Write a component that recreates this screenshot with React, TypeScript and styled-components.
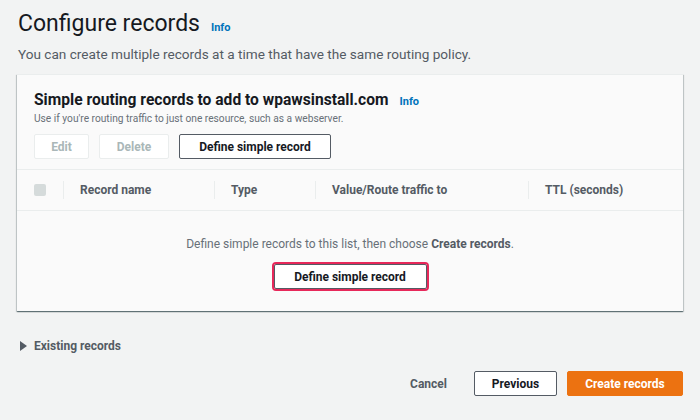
import React from "react";
import styled, { createGlobalStyle } from "styled-components";

const GlobalStyle = createGlobalStyle`
  html, body {
    margin: 0;
    padding: 0;
    background: #f2f3f3;
    font-family: Roboto, "Noto Sans", Arial, sans-serif;
    color: #16191f;
  }
  * { box-sizing: border-box; }
`;

const Page = styled.div`
  width: 700px;
  height: 420px;
  padding: 7px 17px 0 17px;
  overflow: hidden;
`;

const TitleRow = styled.div`
  display: flex;
  align-items: baseline;
  gap: 11px;
  padding-left: 1px;
`;

const Title = styled.h1`
  margin: 0;
  font-size: 23px;
  font-weight: 400;
  line-height: 34px;
  color: #16191f;
`;

const InfoLink = styled.a`
  font-size: 11px;
  font-weight: 700;
  color: #0073bb;
  text-decoration: none;
`;

const Description = styled.p`
  margin: 4px 0 11px 1px;
  font-size: 13.6px;
  line-height: 18px;
  color: #545b64;
`;

const Panel = styled.section`
  background: #fafafa;
  box-shadow: 0 1px 1px 0 rgba(0, 28, 36, 0.45), 1px 1px 1px 0 rgba(0, 28, 36, 0.15),
    -1px 1px 1px 0 rgba(0, 28, 36, 0.15);
  border-top: 1px solid #eaeded;
  width: 666px;
`;

const PanelHeader = styled.div`
  padding: 14px 17px 10px 17px;
`;

const PanelTitleRow = styled.div`
  display: flex;
  align-items: baseline;
  gap: 11px;
`;

const PanelTitle = styled.h2`
  margin: 0;
  font-size: 15.6px;
  font-weight: 700;
  line-height: 22px;
`;

const PanelSub = styled.div`
  font-size: 10.2px;
  line-height: 15px;
  color: #687078;
`;

const ButtonRow = styled.div`
  display: flex;
  gap: 10px;
  margin-top: 8px;
`;

const Button = styled.button<{ $disabled?: boolean; $focus?: boolean; $width?: number }>`
  height: 25px;
  width: ${(p) => (p.$width ? `${p.$width}px` : "auto")};
  padding: 0;
  white-space: nowrap;
  font-family: inherit;
  font-size: 12px;
  font-weight: 700;
  background: #fff;
  border-radius: 2px;
  border: 1px solid ${(p) => (p.$disabled ? "#eaeded" : "#545b64")};
  color: ${(p) => (p.$disabled ? "#aab7b8" : "#16191f")};
  outline: ${(p) => (p.$focus ? "2px solid #e7285a" : "none")};
  outline-offset: 0;
  cursor: pointer;
`;

const PrimaryButton = styled(Button)`
  background: #ec7211;
  border-color: #ec7211;
  color: #fff;
`;

const HeaderRow = styled.div`
  display: grid;
  grid-template-columns: 46px 151px 101px 213px 1fr;
  height: 42px;
  align-items: center;
  border-top: 1px solid #eaeded;
  border-bottom: 1px solid #eaeded;
`;

const HeadCell = styled.div`
  display: flex;
  align-items: center;
  height: 100%;
  padding-left: 17px;
  position: relative;
  font-size: 12px;
  font-weight: 700;
  color: #545b64;
  &:not(:first-child)::before {
    content: "";
    position: absolute;
    left: 0;
    top: 11px;
    bottom: 11px;
    width: 1px;
    background: #eaeded;
  }
`;

const Checkbox = styled.span`
  width: 12px;
  height: 12px;
  background: #d5dbdb;
  border-radius: 2px;
`;

const Empty = styled.div`
  display: flex;
  flex-direction: column;
  align-items: center;
  padding: 24px 0 22px 0;
  gap: 11px;
`;

const EmptyText = styled.div`
  font-size: 12px;
  line-height: 18px;
  color: #687078;
  b {
    color: #545b64;
  }
`;

const Expander = styled.div`
  display: flex;
  align-items: center;
  gap: 7px;
  margin: 28px 0 0 3px;
  font-size: 12px;
  font-weight: 700;
  color: #545b64;
`;

const Caret = styled.span`
  width: 0;
  height: 0;
  border-top: 5px solid transparent;
  border-bottom: 5px solid transparent;
  border-left: 7px solid #545b64;
`;

const Footer = styled.div`
  display: flex;
  justify-content: flex-end;
  align-items: center;
  gap: 10px;
  margin-top: 18px;
  width: 666px;
`;

const TextButton = styled.button`
  background: none;
  border: none;
  font-family: inherit;
  font-size: 12px;
  font-weight: 700;
  color: #545b64;
  padding: 0 17px 0 0;
  height: 25px;
`;

const columns = ["Record name", "Type", "Value/Route traffic to", "TTL (seconds)"];

export default function App() {
  return (
    <Page>
      <GlobalStyle />
      <TitleRow>
        <Title>Configure records</Title>
        <InfoLink href="#">Info</InfoLink>
      </TitleRow>
      <Description>You can create multiple records at a time that have the same routing policy.</Description>
      <Panel>
        <PanelHeader>
          <PanelTitleRow>
            <PanelTitle>Simple routing records to add to wpawsinstall.com</PanelTitle>
            <InfoLink href="#">Info</InfoLink>
          </PanelTitleRow>
          <PanelSub>Use if you're routing traffic to just one resource, such as a webserver.</PanelSub>
          <ButtonRow>
            <Button $disabled $width={55}>Edit</Button>
            <Button $disabled $width={70}>Delete</Button>
            <Button $width={152}>Define simple record</Button>
          </ButtonRow>
        </PanelHeader>
        <HeaderRow>
          <HeadCell>
            <Checkbox />
          </HeadCell>
          {columns.map((c) => (
            <HeadCell key={c}>{c}</HeadCell>
          ))}
        </HeaderRow>
        <Empty>
          <EmptyText>
            Define simple records to this list, then choose <b>Create records</b>.
          </EmptyText>
          <Button $focus $width={153}>Define simple record</Button>
        </Empty>
      </Panel>
      <Expander>
        <Caret />
        Existing records
      </Expander>
      <Footer>
        <TextButton>Cancel</TextButton>
        <Button $width={83}>Previous</Button>
        <PrimaryButton $width={116}>Create records</PrimaryButton>
      </Footer>
    </Page>
  );
}
